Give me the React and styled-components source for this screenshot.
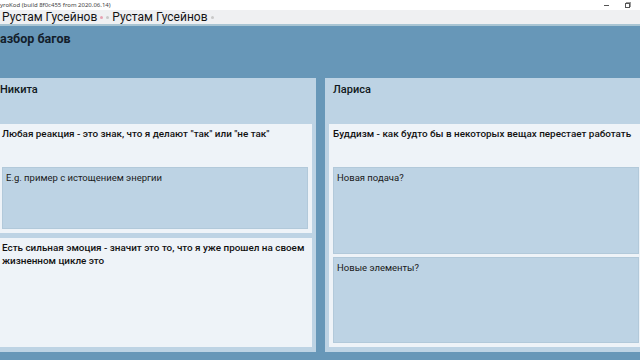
import React from 'react'
import styled, { createGlobalStyle } from 'styled-components'

const GlobalStyle = createGlobalStyle`
  html, body {
    margin: 0;
    padding: 0;
    width: 640px;
    height: 360px;
    overflow: hidden;
    background: #6797b8;
  }
  * { box-sizing: border-box; }
`

const Window = styled.div`
  width: 640px;
  height: 360px;
  display: flex;
  flex-direction: column;
  overflow: hidden;
  font-family: Roboto, "Noto Sans", sans-serif;
  color: #141414;
`

const TitleBar = styled.div`
  height: 10px;
  flex: none;
  background: #ffffff;
  display: flex;
  align-items: center;
  justify-content: space-between;
  padding-right: 10px;
`

const Caption = styled.span`
  font-family: "Noto Sans", sans-serif;
  font-size: 6px;
  line-height: 10px;
  color: #444;
  white-space: nowrap;
`

const Controls = styled.div`
  display: flex;
  align-items: center;
  gap: 16px;
`

const Minimize = styled.span`
  width: 5px;
  height: 1px;
  background: #555;
`

const Restore = styled.span`
  width: 5px;
  height: 5px;
  border: 1px solid #555;
  box-shadow: 1px -1px 0 0 #999;
`

const TabBar = styled.div`
  height: 16px;
  flex: none;
  background: #eff0f2;
  border-bottom: 2px solid #a9c5d3;
  display: flex;
  align-items: center;
  padding-left: 2px;
`

const Tab = styled.div`
  display: flex;
  align-items: center;
  gap: 3px;
  margin-left: ${p => p.$offset || 0}px;
  font-family: Roboto, "Noto Sans", sans-serif;
  font-size: 12px;
  line-height: 14px;
  color: #141414;
  white-space: nowrap;
`

const Dot = styled.span`
  width: 3px;
  height: 3px;
  border-radius: 50%;
  background: ${p => p.$color};
`

const Board = styled.div`
  flex: 1;
  background: #6797b8;
  display: flex;
  flex-direction: column;
`

const Heading = styled.h1`
  margin: 0;
  height: 52px;
  padding-top: 6px;
  font-family: Roboto, "Noto Sans", sans-serif;
  font-size: 12.5px;
  line-height: 14px;
  font-weight: 700;
  color: #13202b;
  white-space: nowrap;
`

const Columns = styled.div`
  display: grid;
  grid-template-columns: 322px 322px;
  gap: 9px;
  margin-left: -6px;
  align-items: start;
`

const Column = styled.div`
  background: #bdd3e4;
  height: 274px;
  padding: 0 4px 5px;
  display: flex;
  flex-direction: column;
  gap: 5px;
`

const ColumnTitle = styled.div`
  height: 41px;
  flex: none;
  padding: 5px 0 0 ${p => p.$indent}px;
  font-size: 11px;
  line-height: 13px;
  font-weight: 500;
  color: #101820;
`

const Card = styled.div`
  background: #eef3f8;
  height: ${p => p.$height}px;
  flex: none;
  padding: 0 4px 4px;
  display: flex;
  flex-direction: column;
  gap: 3px;
`

const CardTitle = styled.div`
  min-height: 40px;
  flex: none;
  margin-right: -4px;
  padding-top: 3px;
  font-size: 9.9px;
  line-height: 13px;
  font-weight: 500;
  color: #111;
`

const Note = styled.div`
  background: #bdd3e4;
  border: 1px solid #b2c9da;
  flex: 1;
  padding: 3px 3px;
  font-size: 9.5px;
  line-height: 13px;
  color: #1a1a1a;
`

const App = () => {
  return (
    <>
      <GlobalStyle />
      <Window>
        <TitleBar>
          <Caption>yroKod (build 8f0c455 from 2020.06.14)</Caption>
          <Controls>
            <Minimize />
            <Restore />
          </Controls>
        </TitleBar>
        <TabBar>
          <Tab>
            Рустам Гусейнов
            <Dot $color="#e7a3b3" />
          </Tab>
          <Tab $offset={3}>
            <Dot $color="#c9c9c9" />
            Рустам Гусейнов
            <Dot $color="#c9c9c9" />
          </Tab>
        </TabBar>
        <Board>
          <Heading>азбор багов</Heading>
          <Columns>
            <Column>
              <ColumnTitle $indent={2}>Никита</ColumnTitle>
              <Card $height={109}>
                <CardTitle>Любая реакция - это знак, что я делают "так" или "не так"</CardTitle>
                <Note>E.g. пример с истощением энергии</Note>
              </Card>
              <Card $height={109}>
                <CardTitle>
                  Есть сильная эмоция - значит это то, что я уже прошел на своем жизненном цикле это
                </CardTitle>
              </Card>
            </Column>
            <Column>
              <ColumnTitle $indent={4}>Лариса</ColumnTitle>
              <Card $height={223}>
                <CardTitle>Буддизм - как будто бы в некоторых вещах перестает работать</CardTitle>
                <Note>Новая подача?</Note>
                <Note>Новые элементы?</Note>
              </Card>
            </Column>
          </Columns>
        </Board>
      </Window>
    </>
  )
}

export default App
